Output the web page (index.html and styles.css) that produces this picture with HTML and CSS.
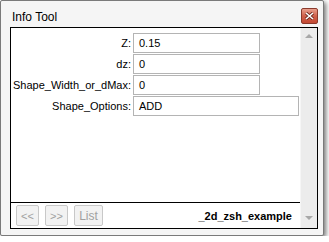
FILE: index.html
```html
<!DOCTYPE html>
<html lang="en">
<head>
    <meta charset="UTF-8">
    <title>Info Tool</title>
    <link rel="stylesheet" href="styles.css">
</head>
<body>

    <div class="window">
        <div class="titlebar">
            <span class="title">Info Tool</span>
            <div class="close-btn">
                <svg width="9" height="8" viewBox="0 0 9 8">
                    <path d="M1 1 L8 7 M8 1 L1 7" stroke="#6b2a20" stroke-width="3.2"/>
                    <path d="M1 1 L8 7 M8 1 L1 7" stroke="#fff" stroke-width="1.6"/>
                </svg>
            </div>
        </div>

        <div class="panel">
            <div class="content">
                <div class="fields">
                    <div class="row">
                        <label>Z:</label>
                        <div class="field">0.15</div>
                    </div>
                    <div class="row">
                        <label>dz:</label>
                        <div class="field">0</div>
                    </div>
                    <div class="row">
                        <label>Shape_Width_or_dMax:</label>
                        <div class="field">0</div>
                    </div>
                    <div class="row">
                        <label>Shape_Options:</label>
                        <div class="field wide">ADD</div>
                    </div>
                </div>

                <div class="footer">
                    <button class="nav-button">&lt;&lt;</button>
                    <button class="nav-button">&gt;&gt;</button>
                    <button class="nav-button list">List</button>
                    <span class="example-name">_2d_zsh_example</span>
                </div>
            </div>

            <div class="scrollbar">
                <span class="arrow up"></span>
                <span class="arrow down"></span>
            </div>
        </div>
    </div>

</body>
</html>
```

FILE: styles.css
```css
body {
    margin: 0;
    padding: 0;
    background-color: #fff;
    font-family: 'Liberation Sans', Arial, sans-serif;
}

.window {
    width: 322px;
    height: 234px;
    border: 1px solid #7a7a7a;
    border-radius: 2px;
    background-color: #f5f5f5;
    box-shadow: 2px 2px 5px rgba(0, 0, 0, 0.55);
    display: flex;
    flex-direction: column;
    padding: 0 5px 6px 9px;
    box-sizing: border-box;
    width: 324px;
    height: 236px;
}

.titlebar {
    height: 26px;
    display: flex;
    align-items: flex-start;
    justify-content: space-between;
}

.title {
    font-size: 12px;
    color: #000;
    margin: 9px 0 0 2px;
}

.close-btn {
    width: 15px;
    height: 14px;
    margin-top: 7px;
    border: 1px solid #8a3a2c;
    border-radius: 2px;
    background: linear-gradient(#e9a08e, #d0604a 50%, #c44a34);
    display: flex;
    justify-content: center;
    align-items: center;
}

.panel {
    flex: 1;
    border: 1px solid #000;
    background-color: #fff;
    display: flex;
}

.content {
    flex: 1;
    display: flex;
    flex-direction: column;
    justify-content: space-between;
}

.fields {
    padding-top: 5px;
    display: flex;
    flex-direction: column;
    gap: 1px;
}

.row {
    display: flex;
    align-items: center;
    gap: 2px;
    font-size: 11px;
}

.row label {
    width: 120px;
    text-align: right;
    color: #000;
}

.field {
    width: 120px;
    height: 18px;
    border: 1px solid #b4b4b4;
    line-height: 18px;
    padding-left: 5px;
    color: #000;
    background-color: #fff;
}

.field.wide {
    width: 159px;
}

.footer {
    border-top: 1px solid #000;
    padding: 2px 8px 2px 5px;
    display: flex;
    align-items: center;
    gap: 6px;
}

.nav-button {
    width: 23px;
    height: 21px;
    padding: 0;
    border: 1px solid #c8c8c8;
    border-radius: 2px;
    background-color: #f2f2f2;
    color: #a0a0a0;
    font-family: 'Liberation Sans', Arial, sans-serif;
    font-size: 11px;
}

.nav-button.list {
    width: 29px;
    font-size: 12px;
}

.example-name {
    margin-left: auto;
    font-size: 11px;
    font-weight: bold;
    color: #000;
}

.scrollbar {
    width: 16px;
    background-color: #ececec;
    border-left: 1px solid #f6f6f6;
    display: flex;
    flex-direction: column;
    justify-content: space-between;
    align-items: center;
    padding: 6px 0 8px;
}

.arrow {
    width: 0;
    height: 0;
    border-left: 4px solid transparent;
    border-right: 4px solid transparent;
}

.arrow.up {
    border-bottom: 4px solid #a8a8a8;
}

.arrow.down {
    border-top: 4px solid #a8a8a8;
}
```
